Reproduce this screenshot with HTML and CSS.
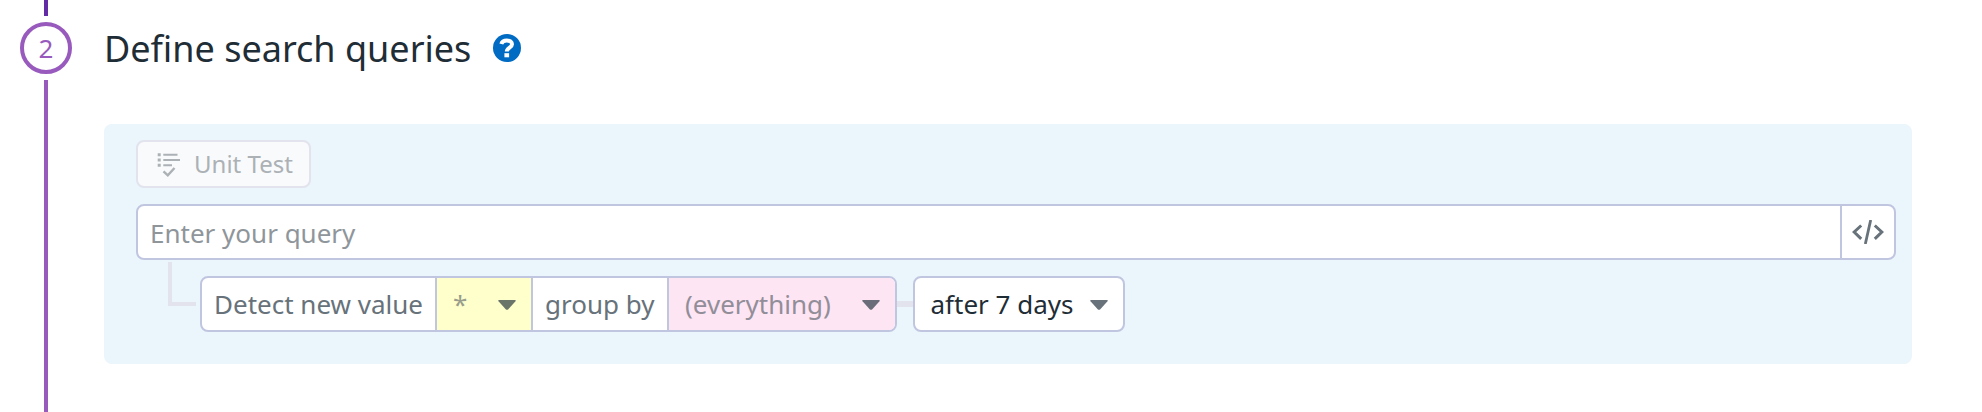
FILE: index.html
```html
<!DOCTYPE html>
<html lang="en">
<head>
<meta charset="utf-8">
<title>Define search queries</title>
<link rel="stylesheet" href="styles.css">
</head>
<body>
<section class="step">
  <div class="rail">
    <div class="rail-prev"></div>
    <div class="rail-number">2</div>
    <div class="rail-next"></div>
  </div>
  <div class="content">
    <header class="heading">
      <h2 class="title">Define search queries</h2>
      <svg class="help" viewBox="0 0 28 28" width="28" height="28">
        <circle cx="14" cy="14" r="14" fill="#006bc2"/>
        <path d="M8.300 10C9 7.600 11 6.500 13.800 6.500c3 0 5.200 1.400 5.200 3.800 0 3.500-5.200 3.200-5.200 7.300" fill="none" stroke="#fff" stroke-width="4"/>
        <rect x="11.400" y="19.200" width="4.700" height="4.100" fill="#fff"/>
      </svg>
    </header>
    <div class="panel">
      <button class="unit-test" disabled>
        <svg class="unit-icon" viewBox="0 0 24 26" width="24" height="26" fill="none" stroke="#abb1b5" stroke-width="2">
          <path d="M.7 3.700h3M.7 9h3M.7 14.300h3" stroke-width="3"/>
          <path d="M6.300 3.700h14.200M6.300 9H23M6.300 14.300H15"/>
          <path d="M6.500 20.300l4.300 4 6.700-7.300" stroke-width="2.400"/>
        </svg>
        <span>Unit Test</span>
      </button>
      <div class="query">
        <div class="query-input">Enter your query</div>
        <div class="query-code">
          <svg viewBox="0 0 32 24" width="32" height="24" fill="none" stroke="#67727a" stroke-width="3">
            <path d="M9.200 5.500L2.200 12l7 6.800M22.800 5.500l7 6.500-7 6.800"/>
            <path d="M18.700 0l-5.400 24" stroke-width="2.800"/>
          </svg>
        </div>
      </div>
      <div class="rule">
        <div class="elbow"></div>
        <div class="group">
          <div class="cell cell-detect">Detect new value</div>
          <div class="cell cell-value"><span class="muted">*</span><svg class="caret" viewBox="0 0 18 10" width="18" height="10"><path d="M1 0h16q1.500 0 .5 1.200l-7.200 8q-1.300 1.300-2.600 0L.5 1.200Q-.5 0 1 0z"/></svg></div>
          <div class="cell cell-by">group by</div>
          <div class="cell cell-everything"><span class="muted">(everything)</span><svg class="caret" viewBox="0 0 18 10" width="18" height="10"><path d="M1 0h16q1.500 0 .5 1.200l-7.200 8q-1.300 1.300-2.600 0L.5 1.200Q-.5 0 1 0z"/></svg></div>
        </div>
        <div class="link"></div>
        <div class="period"><span>after 7 days</span><svg class="caret" viewBox="0 0 18 10" width="18" height="10"><path d="M1 0h16q1.500 0 .5 1.200l-7.200 8q-1.300 1.300-2.600 0L.5 1.200Q-.5 0 1 0z"/></svg></div>
      </div>
    </div>
  </div>
</section>
</body>
</html>
```
FILE: styles.css
```css
* {
  box-sizing: border-box;
}

body {
  margin: 0;
  background: #fff;
  color: #1f2d36;
  font-family: "Noto Sans", sans-serif;
  font-size: 26px;
  line-height: 36px;
  overflow: hidden;
}

.step {
  display: flex;
  height: 412px;
}

.rail {
  display: flex;
  flex-direction: column;
  align-items: center;
  gap: 6px;
  width: 52px;
  margin: 0 32px 0 20px;
}

.rail-prev {
  width: 4px;
  height: 16px;
  background: #632ca6;
}

.rail-number {
  display: flex;
  align-items: center;
  justify-content: center;
  width: 52px;
  height: 52px;
  border: 4px solid #985bbd;
  border-radius: 50%;
  color: #985bbd;
}

.rail-next {
  flex: 1;
  width: 4px;
  background: #985bbd;
}

.content {
  width: 1808px;
}

.heading {
  display: flex;
  align-items: center;
  gap: 22px;
  height: 96px;
}

.title {
  margin: 0;
  padding-top: 2px;
  font-size: 36px;
  font-weight: 400;
  line-height: 48px;
}

.help {
  flex: none;
}

.panel {
  height: 240px;
  margin-top: 28px;
  padding: 16px 16px 0 32px;
  border-radius: 8px;
  background: #eaf5fc;
}

.unit-test {
  display: flex;
  align-items: center;
  gap: 13px;
  width: 175px;
  height: 48px;
  padding: 0 0 0 19px;
  border: 2px solid #e2e3ed;
  border-radius: 8px;
  background: #f9fafc;
  color: #abb1b5;
  font: 24px/32px "Noto Sans", sans-serif;
  white-space: nowrap;
}

.unit-icon {
  flex: none;
}

.query {
  display: flex;
  height: 56px;
  margin-top: 16px;
  border: 2px solid #c1c6e0;
  border-radius: 8px;
  background: #fff;
}

.query-input {
  flex: 1;
  padding: 9px 0 0 12px;
  color: #8f969b;
}

.query-code {
  display: flex;
  align-items: center;
  justify-content: center;
  width: 54px;
  border-left: 2px solid #c1c6e0;
}

.rule {
  display: flex;
  align-items: center;
  margin-top: 16px;
  padding-left: 32px;
}

.elbow {
  align-self: flex-start;
  width: 28px;
  height: 44px;
  margin: -14px 4px 0 0;
  border: solid #e2e3ed;
  border-width: 0 0 4px 4px;
}

.group {
  display: flex;
  width: 697px;
  height: 56px;
  border: 2px solid #c1c6e0;
  border-radius: 8px;
  background: #fff;
  color: #67727a;
  overflow: hidden;
}

.cell {
  display: flex;
  align-items: center;
  justify-content: space-between;
  padding-left: 12px;
  white-space: nowrap;
}

.cell + .cell {
  border-left: 2px solid #c1c6e0;
}

.cell-detect {
  width: 233px;
}

.cell-value {
  width: 96px;
  padding: 0 15px 0 16px;
  background: #ffffcb;
  color: #6b7469;
}

.cell-by {
  width: 136px;
}

.cell-everything {
  flex: 1;
  padding: 0 15px 0 16px;
  background: #fde5f3;
  color: #6a6d79;
}

.cell-value .muted {
  color: #989d8c;
}

.cell-everything .muted {
  color: #928e99;
}

.caret {
  flex: none;
  margin-top: 2px;
  fill: currentColor;
}

.link {
  width: 16px;
  height: 6px;
  background: #e2e3ed;
}

.period {
  display: flex;
  align-items: center;
  justify-content: space-between;
  width: 212px;
  height: 56px;
  padding: 0 15px 0 15.500px;
  border: 2px solid #c1c6e0;
  border-radius: 8px;
  background: #fff;
  white-space: nowrap;
}

.period .caret {
  color: #67727a;
}
```
